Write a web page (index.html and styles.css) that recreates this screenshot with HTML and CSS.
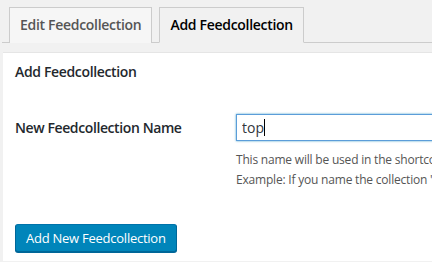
FILE: index.html
```html
<!DOCTYPE html>
<html lang="en">
<head>
    <meta charset="UTF-8">
    <title>Feedcollections</title>
    <link rel="stylesheet" href="styles.css">
</head>
<body>
    <div class="wrap">
        <h2 class="nav-tabs">
            <a class="nav-tab" href="#">Edit Feedcollection</a>
            <a class="nav-tab nav-tab-active" href="#">Add Feedcollection</a>
        </h2>
        <div class="panel">
            <h3 class="panel-title">Add Feedcollection</h3>
            <form class="form-row">
                <label class="field-label" for="fc-name">New Feedcollection Name</label>
                <div class="field">
                    <div class="input-box">
                        <input type="text" id="fc-name" class="regular-text" value="top">
                        <span class="caret"></span>
                    </div>
                    <p class="description">This name will be used in the shortcode to display the collection.</p>
                    <p class="description">Example: If you name the collection "rock" the shortcode is [feedcollection name="rock"]</p>
                </div>
            </form>
            <button class="button-primary" type="button">Add New Feedcollection</button>
        </div>
    </div>
</body>
</html>
```

FILE: styles.css
```css
body {
    margin: 0;
    background: #f1f1f1;
    color: #23282d;
    font-family: "Open Sans", "Noto Sans", sans-serif;
    font-size: 13px;
    overflow: hidden;
}

.wrap {
    margin-left: 2px;
}

.nav-tabs {
    display: flex;
    margin: 0;
    padding: 7px 0 0 7px;
    border-bottom: 1px solid #ccc;
    font-size: 14px;
    font-weight: 600;
    line-height: 24px;
    letter-spacing: -0.3px;
}

.nav-tab {
    margin-bottom: -1px;
    padding: 5px 10px;
    border: 1px solid #ccc;
    border-bottom: none;
    background: #f6f6f6;
    color: #555;
    text-decoration: none;
    white-space: nowrap;
}

.nav-tab + .nav-tab {
    margin-left: 7px;
}

.nav-tab-active {
    background: #f1f1f1;
    border-bottom: 1px solid #f1f1f1;
    color: #000;
}

.panel {
    margin: 9px 0 0 1px;
    padding: 0 12px 9px;
    background: #fff;
    border-top: 1px solid #e5e5e5;
    height: 199px;
    overflow: hidden;
}

.panel-title {
    margin: 0;
    padding: 8px 0;
    font-size: 14px;
    font-weight: 600;
    line-height: 21px;
    letter-spacing: -0.35px;
}

.form-row {
    display: flex;
    margin-top: 24px;
}

.field-label {
    width: 221px;
    flex-shrink: 0;
    padding-top: 3px;
    font-size: 14px;
    font-weight: 600;
    line-height: 21px;
    letter-spacing: -0.4px;
}

.input-box {
    position: relative;
}

.regular-text {
    display: block;
    width: 360px;
    height: 27px;
    box-sizing: border-box;
    margin: 0;
    padding: 0 5px;
    border: 1px solid #5b9dd9;
    box-shadow: 0 0 2px rgba(30, 140, 190, 0.8);
    font-family: inherit;
    font-size: 14px;
    color: #32373c;
    outline: none;
}

.caret {
    position: absolute;
    left: 28px;
    top: 5px;
    width: 1px;
    height: 17px;
    background: #000;
}

.description {
    margin: 9px 0 0;
    color: #555;
    font-size: 12px;
    line-height: 20px;
    letter-spacing: -0.2px;
    white-space: nowrap;
}

.description + .description {
    margin-top: 0;
}

.button-primary {
    margin-top: 34px;
    height: 28px;
    padding: 0 10px;
    background: #0085ba;
    border: 1px solid #0073aa;
    border-color: #0073aa #006799 #006799;
    border-radius: 3px;
    box-shadow: 0 1px 0 #006799;
    color: #fff;
    font-family: inherit;
    font-size: 13px;
    line-height: 26px;
    letter-spacing: -0.25px;
}
```
